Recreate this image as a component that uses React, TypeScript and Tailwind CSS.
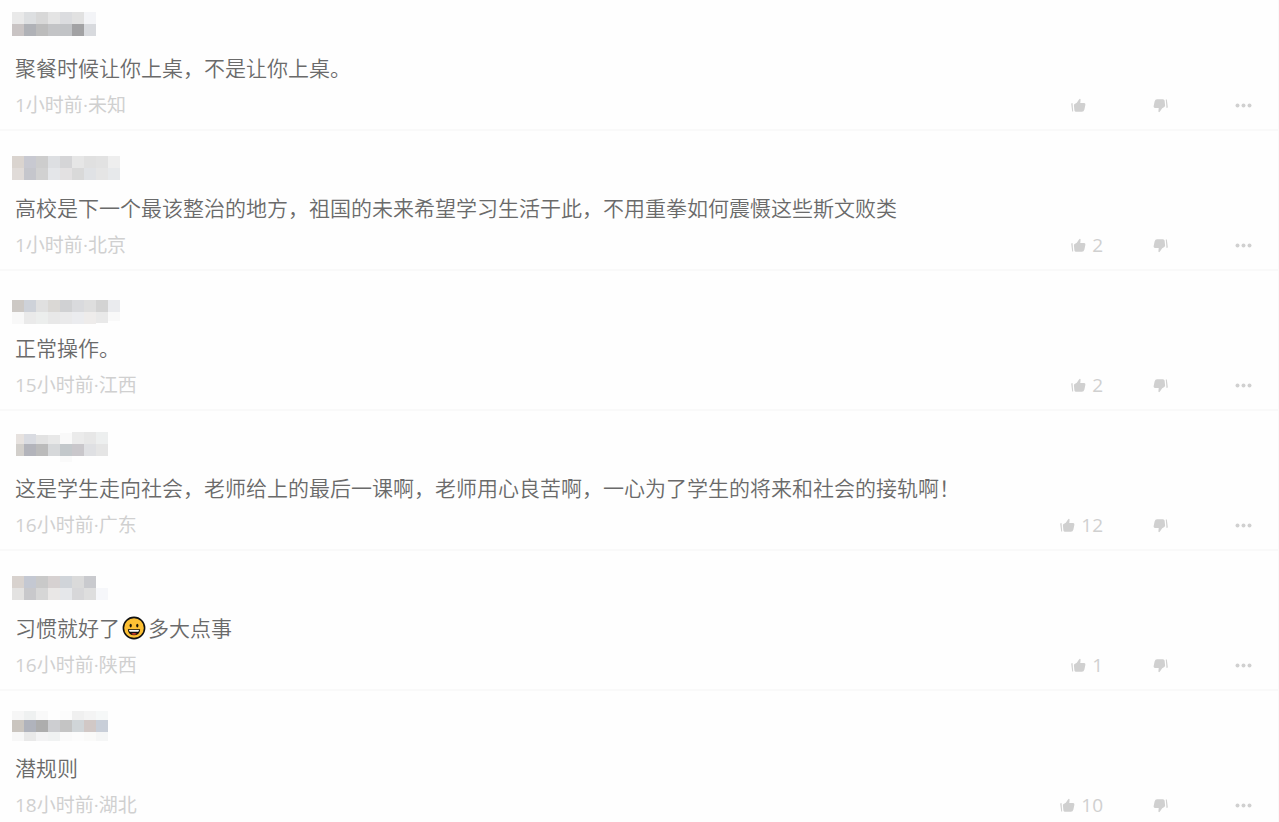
import React from "react";

type Cell = [x: number, y: number, w: number, h: number, fill: string];

interface Comment {
  id: number;
  name: Cell[];
  before: string;
  after?: string;
  time: string;
  place: string;
  likes?: number;
}

/** One strip of equally wide colour cells. */
const strip = (x: number, y: number, h: number, fills: string[]): Cell[] =>
  fills.map((fill, i) => [x + i * 12, y, 12, h, fill]);

const comments: Comment[] = [
  {
    id: 1,
    name: [
      ...strip(12, 12, 12, ["#e9e9e9", "#dddfe1", "#d8d8d8", "#e4e4e4", "#dbdcdf", "#e1e1e1", "#f3f4f7"]),
      ...strip(12, 24, 12, ["#c9c4c4", "#b0b2b7", "#bcbcbc", "#c3c4c6", "#c1c3c6", "#a2a2a4", "#d8dade"]),
    ],
    before: "聚餐时候让你上桌，不是让你上桌。",
    time: "1小时前",
    place: "未知",
  },
  {
    id: 2,
    name: [
      ...strip(12, 16, 12, ["#dad4cf", "#c8c9d1", "#cdcdcd", "#dddfe2", "#d5d5d7", "#e6e6e6", "#e0e0e0", "#e2e2e2", "#eeeeee"]),
      ...strip(12, 28, 12, ["#e0dbd8", "#c5c6cc", "#d1d1d1", "#e4e6e9", "#e3e1e2", "#d9d9d9", "#e0e2e5", "#e5e5e5", "#e7e9eb"]),
    ],
    before: "高校是下一个最该整治的地方，祖国的未来希望学习生活于此，不用重拳如何震慑这些斯文败类",
    time: "1小时前",
    place: "北京",
    likes: 2,
  },
  {
    id: 3,
    name: [
      ...strip(12, 20, 12, ["#cdc9c5", "#ced2d9", "#e0e0e0", "#dad8d5", "#d0d1d3", "#d9dadd", "#dedede", "#d3d3d3", "#eaebee"]),
      ...strip(12, 32, 12, ["#f8f8f8", "#eaeaea", "#eceeed", "#e8e8e8", "#eaeaeb", "#ebecef", "#eeeceb"]),
      [96, 32, 12, 11, "#e9e9e9"],
      [108, 32, 12, 9, "#f9f9f9"],
    ],
    before: "正常操作。",
    time: "15小时前",
    place: "江西",
    likes: 2,
  },
  {
    id: 4,
    name: [
      [16, 14, 8, 10, "#e7e2df"],
      [24, 14, 12, 10, "#d9dbe1"],
      [36, 15, 12, 9, "#e2e2e2"],
      [48, 15, 12, 9, "#e8e8e8"],
      [60, 13, 12, 11, "#f9f9f9"],
      ...strip(72, 12, 12, ["#ebebeb", "#e7e7e7", "#edefef"]),
      [16, 24, 8, 12, "#d2cfcb"],
      ...strip(24, 24, 12, ["#b3b4bb", "#bbbbbb", "#d6d8da", "#c3c8cb", "#c9c7cb", "#dfe0e3", "#e5e5e5"]),
      [60, 36, 12, 6, "#fafafa"],
    ],
    before: "这是学生走向社会，老师给上的最后一课啊，老师用心良苦啊，一心为了学生的将来和社会的接轨啊！",
    time: "16小时前",
    place: "广东",
    likes: 12,
  },
  {
    id: 5,
    name: [
      ...strip(12, 16, 12, ["#d8d2ce", "#c4c8d2", "#c9c9c9", "#d6d1d1", "#d0d4d9", "#dadada", "#c9cace"]),
      ...strip(12, 28, 12, ["#e3e2e1", "#c8c8cb", "#d6d6d6", "#e9e7e6", "#e5e7ea", "#d7d7d9", "#dedede", "#f6f7fa"]),
    ],
    before: "习惯就好了",
    after: "多大点事",
    time: "16小时前",
    place: "陕西",
    likes: 1,
  },
  {
    id: 6,
    name: [
      ...strip(12, 11, 9, ["#f6f6f6", "#eff1f1", "#f9f9f9", "#fefefe", "#fcfcfc", "#f0f0f0", "#f4f4f4", "#f6f8f8"]),
      ...strip(12, 20, 12, ["#cac5bf", "#b0b3bc", "#adadad", "#cdced1", "#c4c4c4", "#d0d5d8", "#d1c8c6", "#c8ced8"]),
      ...strip(12, 32, 9, ["#f7f7f7", "#e9e9e9", "#f3f3f4", "#f0f2f2", "#fafafa", "#fcfcfc", "#fafaf9", "#f5f6f6"]),
    ],
    before: "潜规则",
    time: "18小时前",
    place: "湖北",
    likes: 10,
  },
];

function Thumb({ down = false }: { down?: boolean }) {
  return (
    <svg
      viewBox="0 0 15 15"
      className={down ? "size-[15px] rotate-180" : "size-[15px]"}
      fill="currentColor"
      aria-hidden="true"
    >
      <path d="M0.2 5.4 1.5 5 2.2 13.6 1.2 13.6Z" />
      <path d="M2.9 7.2Q3 6.2 4 5.8L5.8 4.8 8.2 1.2Q9.2 0.3 9.6 1.5L9.3 5 13.2 5.1Q14.6 5.3 14.4 6.7L13.4 11.6Q12.8 13.8 11 13.8H5Q3.7 13.7 3.4 12.4Z" />
    </svg>
  );
}

function Grin() {
  return (
    <svg viewBox="0 0 24 24" className="mx-0.5 size-6 shrink-0" role="img" aria-label="笑脸">
      <circle cx="12" cy="12" r="10.6" fill="#fdc034" stroke="#111" strokeWidth="1.6" />
      <ellipse cx="8.7" cy="9.6" rx="1.1" ry="1.9" fill="#1d1608" />
      <ellipse cx="15.3" cy="9.6" rx="1.1" ry="1.9" fill="#1d1608" />
      <path d="M5.8 13.2H18.2Q17.6 19.3 12 19.3T5.8 13.2Z" fill="#111" />
      <path d="M7 14H17Q16.9 15.5 16 15.7H8Q7.1 15.5 7 14Z" fill="#fff" />
      <path d="M9 18Q12 15.8 15 18Q12 19.4 9 18Z" fill="#e0402c" />
    </svg>
  );
}

function CommentRow({ comment }: { comment: Comment }) {
  const { name, before, after, time, place, likes } = comment;
  return (
    <li className="group border-b-2 border-[#f9f9f9] last:border-b-0">
      <div className="flex h-[62px] items-end group-first:h-[53px]">
        <svg viewBox="0 0 132 53" className="h-[53px] w-[132px]" shapeRendering="crispEdges" aria-hidden="true">
          {name.map(([x, y, w, h, fill], i) => (
            <rect key={i} x={x} y={y} width={w} height={h} fill={fill} />
          ))}
        </svg>
      </div>
      <p className="flex min-h-[30px] items-center px-[15px] text-[21px] leading-[30px] text-[#6a6a6a]">
        <span>{before}</span>
        {after && <Grin />}
        {after && <span>{after}</span>}
      </p>
      <div className="flex items-center justify-between pt-2 pr-[26px] pb-2.5 pl-[15px] font-normal text-[#d0d0d0] group-last:pb-0">
        <span className="text-[19px] leading-7">
          {time}·{place}
        </span>
        <div className="flex h-7 items-center">
          <button type="button" aria-label="赞" className="flex items-center gap-1.5">
            <Thumb />
            <span className="min-w-[11px] text-right text-[19px] leading-7">{likes}</span>
          </button>
          <button type="button" aria-label="踩" className="ml-[50px]">
            <Thumb down />
          </button>
          <button type="button" aria-label="更多" className="ml-[67px]">
            <svg viewBox="0 0 17 15" className="h-[15px] w-[17px]" fill="currentColor" aria-hidden="true">
              <circle cx="2.5" cy="7.5" r="2" />
              <circle cx="8.5" cy="7.5" r="2" />
              <circle cx="14.5" cy="7.5" r="2" />
            </svg>
          </button>
        </div>
      </div>
    </li>
  );
}

export default function App() {
  return (
    <main className="min-h-screen border-r border-[#f9f9f9] bg-[#fefefe] font-['Open_Sans','Noto_Sans_CJK_SC',sans-serif] font-[350]">
      <ul lang="zh-CN">
        {comments.map((comment) => (
          <CommentRow key={comment.id} comment={comment} />
        ))}
      </ul>
    </main>
  );
}
